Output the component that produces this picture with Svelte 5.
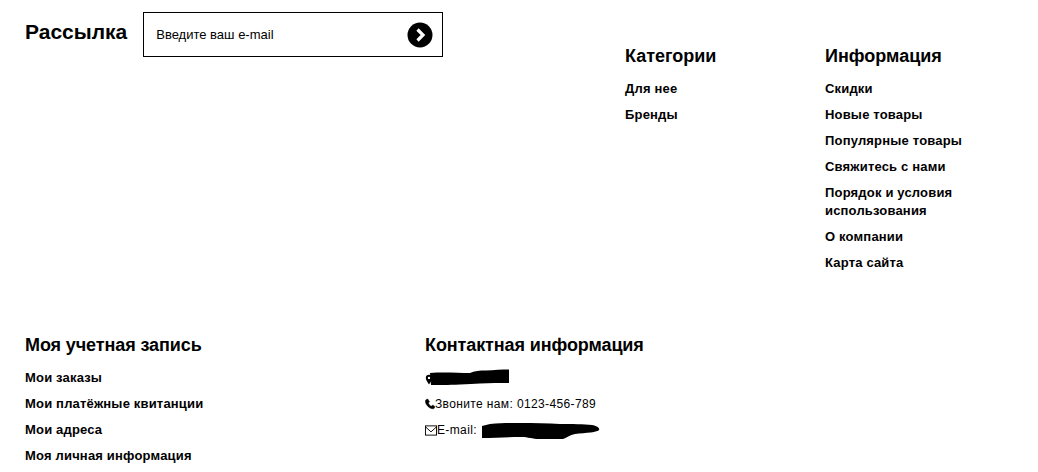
<script>
  const categories = ['Для нее', 'Бренды'];
  const information = ['Скидки', 'Новые товары', 'Популярные товары', 'Свяжитесь с нами', 'Порядок и условия использования', 'О компании', 'Карта сайта'];
  const account = ['Мои заказы', 'Мои платёжные квитанции', 'Мои адреса', 'Моя личная информация'];
</script>

<div class="footer">
  <div class="top">
    <section class="newsletter">
      <h3>Рассылка</h3>
      <div class="field">
        <span>Введите ваш e-mail</span>
        <svg class="go" width="26" height="26" viewBox="0 0 26 26" aria-hidden="true">
          <circle cx="13" cy="13" r="12.5" fill="#000" />
          <path d="M10.5 7.5 16 13l-5.500 5.500" fill="none" stroke="#fff" stroke-width="3.200" />
        </svg>
      </div>
    </section>
    <section class="col">
      <h4>Категории</h4>
      <ul>{#each categories as c}<li>{c}</li>{/each}</ul>
    </section>
    <section class="col">
      <h4>Информация</h4>
      <ul>{#each information as c}<li>{c}</li>{/each}</ul>
    </section>
  </div>
  <div class="bottom">
    <section class="col wide">
      <h4>Моя учетная запись</h4>
      <ul>{#each account as c}<li>{c}</li>{/each}</ul>
    </section>
    <section class="col wide">
      <h4>Контактная информация</h4>
      <ul class="contact">
        <li>
          <svg class="pin" width="8" height="13" viewBox="0 0 10 14" aria-hidden="true"><path d="M5 1a4 4 0 0 0-4 4c0 3 4 8 4 8s4-5 4-8a4 4 0 0 0-4-4z" fill="#000" /><circle cx="5" cy="5" r="1.500" fill="#fff" /></svg>
          <svg class="blot one" width="79" height="18" viewBox="0 0 79 18" aria-hidden="true"><path d="M0 4 C14 3 28 4 40 4 C44 2 50 1.500 56 1.500 C64 1 72 .5 79 .5 L79 14 C70 14 60 14 50 14.500 C44 15 38 15 30 15.500 C18 16 8 16 1 16 Z" fill="#000" /></svg>
        </li>
        <li>
          <svg class="phone" width="10" height="12" viewBox="0 0 11 12" aria-hidden="true"><path d="M3 .5 5 3.500 3.800 5C4.500 6.800 5.500 7.800 7 8.500L8.500 7 11 9C11 10.500 9.500 11.500 8 11.300 4 10.500.5 6.500.3 3 .3 1.800 1.500.7 3 .5z" fill="#000" stroke="#000" stroke-width=".4" /></svg><span>Звоните нам: 0123-456-789</span>
        </li>
        <li>
          <svg width="12" height="11" viewBox="0 0 13 11" aria-hidden="true"><rect x=".5" y=".5" width="12" height="10" fill="none" stroke="#000" /><path d="M.5 1.500 6.500 7l6-5.500" fill="none" stroke="#000" /></svg><span>E-mail:</span>
          <svg class="blot two" width="118" height="18" viewBox="0 0 118 18" aria-hidden="true"><path d="M0 5 L8 3 C20 2 30 2 38 2 C52 2 66 2 78 3 C90 3 102 3 110 4 C115 5 118 7 117 9 C116 11 104 12 93 13 C88 14 84 17 81 18 C72 18 64 18 55 18 C48 17 44 16 38 16 C26 16 12 17 0 17 Z" fill="#000" /></svg>
        </li>
      </ul>
    </section>
  </div>
</div>

<style>
  :global(body) {
    margin: 0;
    background: #fff;
  }
  .footer {
    width: 1038px;
    height: 472px;
    overflow: hidden;
    box-sizing: border-box;
    padding-left: 25px;
    color: #000;
    font-family: "Liberation Sans", Arial, sans-serif;
  }
  .top {
    display: grid;
    grid-template-columns: 600px 200px 200px;
    height: 333px;
    padding-top: 12px;
    box-sizing: border-box;
  }
  .bottom {
    display: grid;
    grid-template-columns: 400px 400px;
  }
  .newsletter {
    display: flex;
    align-items: flex-start;
    gap: 16px;
  }
  h3 {
    margin: 8px 0 0;
    font-size: 21px;
    line-height: 24px;
    font-weight: 700;
  }
  .field {
    width: 300px;
    height: 45px;
    box-sizing: border-box;
    border: 1px solid #000;
    padding: 0 9px 0 12px;
    display: flex;
    align-items: center;
    justify-content: space-between;
    font-size: 13px;
  }
  .col {
    padding-top: 32px;
  }
  .col.wide {
    padding-top: 0;
  }
  h4 {
    margin: 0 0 12px;
    font-size: 18px;
    line-height: 24px;
    font-weight: 700;
  }
  .wide h4 {
    letter-spacing: -.1px;
  }
  ul {
    list-style: none;
    margin: 0;
    padding: 0;
  }
  li {
    font-size: 13px;
    line-height: 18px;
    font-weight: 700;
    letter-spacing: .18px;
    margin-bottom: 8px;
    width: 170px;
  }
  .wide li {
    width: auto;
  }
  .contact li {
    font-weight: 400;
    font-size: 12px;
    letter-spacing: .37px;
    display: flex;
    align-items: center;
    height: 18px;
  }
  .contact .pin {
    margin-top: 2px;
  }
  .contact .phone {
    margin-top: -1px;
  }
  .contact .blot {
    margin-left: 5px;
  }
  .contact .blot.one {
    margin-left: -3px;
  }
</style>
